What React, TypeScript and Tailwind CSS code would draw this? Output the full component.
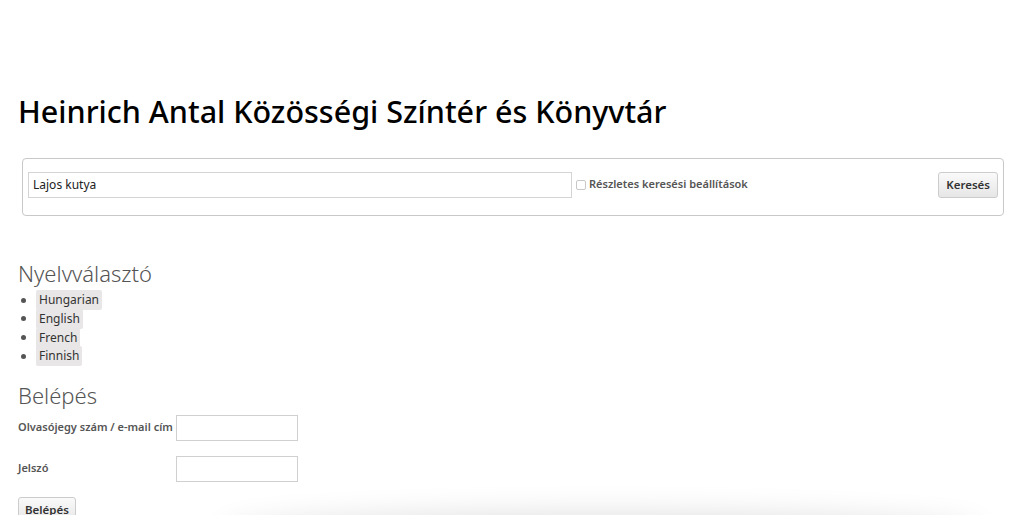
import { useState } from 'react';

const languages = ['Hungarian', 'English', 'French', 'Finnish'];

export default function App() {
    const [query, setQuery] = useState('Lajos kutya');

    return (
        <div className="min-h-[515px] bg-white text-[#333] overflow-hidden" style={{ fontFamily: '"Noto Sans", "Open Sans", sans-serif' }}>
            <div className="px-[18px] pt-[91px]">
                <h1 className="text-[30.5px] leading-[40px] font-medium text-black">
                    Heinrich Antal Közösségi Színtér és Könyvtár
                </h1>

                <form className="mt-[27px] ml-1 mr-[2px] h-[58px] border border-[#c8c8c8] rounded-[4px] flex items-center px-[5px] pb-[5px]">
                    <input
                        value={query}
                        onChange={e => setQuery(e.target.value)}
                        className="w-[544px] h-[26px] border border-[#d4d4d4] px-[4px] text-[12px] text-[#222] outline-none"
                    />
                    <label className="ml-[4px] flex items-center gap-[3px] text-[11px] font-semibold text-[#555]">
                        <span className="w-[10px] h-[10px] border border-[#c8c8c8] rounded-[2px] bg-white" />
                        Részletes keresési beállítások
                    </label>
                    <button
                        type="button"
                        className="ml-auto h-[26px] px-[7px] rounded-[3px] border border-[#ccc] bg-gradient-to-b from-[#fafafa] to-[#e6e6e6] text-[11.5px] font-semibold text-[#333]"
                    >
                        Keresés
                    </button>
                </form>

                <h2 className="mt-[43px] text-[22px] leading-[28px] font-light text-[#555]">Nyelvválasztó</h2>
                <ul className="mt-[4px]">
                    {languages.map(lang => (
                        <li key={lang} className="flex items-center h-[18.67px]">
                            <span className="w-[5px] h-[5px] rounded-full bg-[#555] ml-[3px] mr-[10px]" />
                            <span className="bg-[#e8e6e6] rounded-[2px] px-[3px] h-[20px] leading-[20px] text-[12px] text-[#333]">{lang}</span>
                        </li>
                    ))}
                </ul>

                <h2 className="mt-[15px] text-[22px] leading-[28px] font-light text-[#555]">Belépés</h2>
                <div className="mt-[6px] flex items-center">
                    <label className="w-[158px] text-[11px] font-semibold text-[#555]">Olvasójegy szám / e-mail cím</label>
                    <input className="w-[122px] h-[26px] border border-[#d0d0d0] outline-none" />
                </div>
                <div className="mt-[15px] flex items-center">
                    <label className="w-[158px] text-[11px] font-semibold text-[#555]">Jelszó</label>
                    <input type="password" className="w-[122px] h-[26px] border border-[#d0d0d0] outline-none" />
                </div>
                <button
                    type="button"
                    className="mt-[15px] h-[26px] px-[6px] rounded-[3px] border border-[#ccc] bg-gradient-to-b from-[#fafafa] to-[#e6e6e6] text-[11.5px] font-semibold text-[#333]"
                >
                    Belépés
                </button>
            </div>
            <div className="ml-[220px] mr-[40px] h-[40px] rounded-[50%] shadow-[0_-10px_30px_rgba(0,0,0,0.12)]" />
        </div>
    );
}
